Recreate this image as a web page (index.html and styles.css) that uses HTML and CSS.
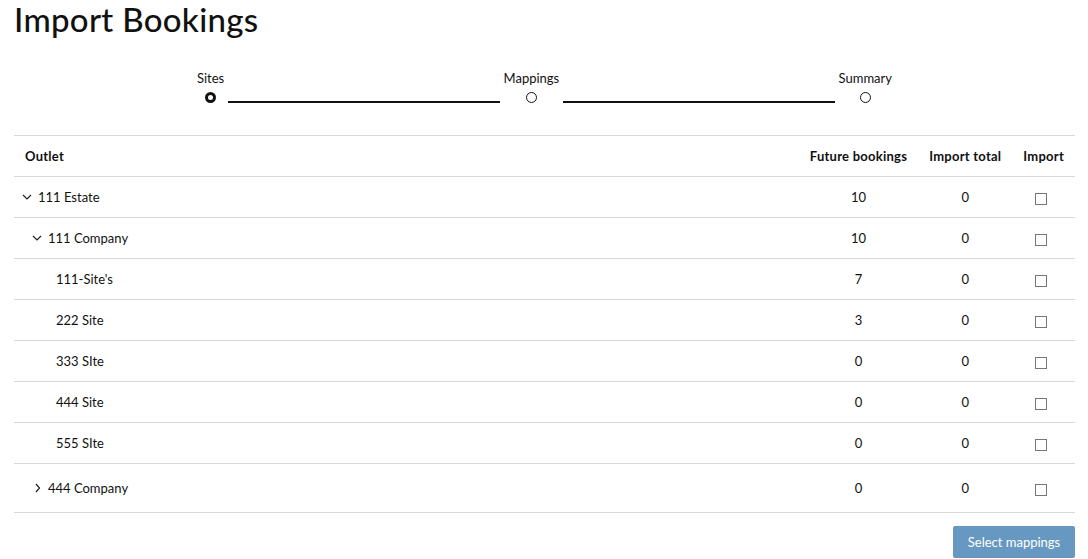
FILE: index.html
```html
<!DOCTYPE html>
<html>
<head>
<meta charset="utf-8">
<link rel="stylesheet" href="styles.css">
</head>
<body>
<main class="page">
  <h1 class="title">Import Bookings</h1>

  <div class="stepper">
    <div class="step">
      <span class="step-label">Sites</span>
      <span class="step-dot active"></span>
    </div>
    <div class="step-line"></div>
    <div class="step">
      <span class="step-label">Mappings</span>
      <span class="step-dot"></span>
    </div>
    <div class="step-line"></div>
    <div class="step">
      <span class="step-label">Summary</span>
      <span class="step-dot"></span>
    </div>
  </div>

  <table class="grid">
    <thead>
      <tr>
        <th class="col-outlet">Outlet</th>
        <th class="col-num">Future bookings</th>
        <th class="col-num">Import total</th>
        <th class="col-num">Import</th>
      </tr>
    </thead>
    <tbody>
      <tr>
        <td class="col-outlet"><span class="outlet lvl0"><svg class="chev" width="10" height="10" viewBox="0 0 10 10"><polyline points="1,3 5,7 9,3" fill="none" stroke="#222" stroke-width="1.2"/></svg>111 Estate</span></td>
        <td class="col-num">10</td><td class="col-num">0</td><td class="col-num"><span class="box"></span></td>
      </tr>
      <tr>
        <td class="col-outlet"><span class="outlet lvl1"><svg class="chev" width="10" height="10" viewBox="0 0 10 10"><polyline points="1,3 5,7 9,3" fill="none" stroke="#222" stroke-width="1.2"/></svg>111 Company</span></td>
        <td class="col-num">10</td><td class="col-num">0</td><td class="col-num"><span class="box"></span></td>
      </tr>
      <tr>
        <td class="col-outlet"><span class="outlet lvl2">111-Site's</span></td>
        <td class="col-num">7</td><td class="col-num">0</td><td class="col-num"><span class="box"></span></td>
      </tr>
      <tr>
        <td class="col-outlet"><span class="outlet lvl2">222 Site</span></td>
        <td class="col-num">3</td><td class="col-num">0</td><td class="col-num"><span class="box"></span></td>
      </tr>
      <tr>
        <td class="col-outlet"><span class="outlet lvl2">333 SIte</span></td>
        <td class="col-num">0</td><td class="col-num">0</td><td class="col-num"><span class="box"></span></td>
      </tr>
      <tr>
        <td class="col-outlet"><span class="outlet lvl2">444 Site</span></td>
        <td class="col-num">0</td><td class="col-num">0</td><td class="col-num"><span class="box"></span></td>
      </tr>
      <tr>
        <td class="col-outlet"><span class="outlet lvl2">555 SIte</span></td>
        <td class="col-num">0</td><td class="col-num">0</td><td class="col-num"><span class="box"></span></td>
      </tr>
      <tr class="group-row">
        <td class="col-outlet"><span class="outlet lvl1"><svg class="chev" width="10" height="10" viewBox="0 0 10 10"><polyline points="4,1 7.5,5 4,9" fill="none" stroke="#222" stroke-width="1.2"/></svg>444 Company</span></td>
        <td class="col-num">0</td><td class="col-num">0</td><td class="col-num"><span class="box"></span></td>
      </tr>
    </tbody>
  </table>

  <div class="actions">
    <button class="btn" type="button">Select mappings</button>
  </div>
</main>
</body>
</html>
```

FILE: styles.css
```css
html, body {
  margin: 0;
  padding: 0;
  background: #fff;
}

body {
  font-family: Lato, "Noto Sans", sans-serif;
  color: #111;
  font-size: 13px;
}

.page {
  padding: 0 13px 0 14px;
}

.title {
  margin: 0;
  font-size: 33px;
  line-height: 38px;
  font-weight: 500;
  letter-spacing: 0.3px;
}

.stepper {
  display: flex;
  align-items: flex-end;
  padding: 32px 183px 0 183px;
}

.step {
  display: flex;
  flex-direction: column;
  align-items: center;
}

.step-label {
  font-size: 13px;
  line-height: 16px;
}

.step-dot {
  margin-top: 6px;
  width: 11px;
  height: 11px;
  border-radius: 50%;
  border: 1.5px solid #111;
  box-sizing: border-box;
}

.step-dot.active {
  border: 3.5px solid #111;
}

.step-line {
  flex: 1;
  height: 2px;
  background: #111;
  margin: 0 4px 0 4px;
}

.grid {
  margin-top: 32px;
  width: 100%;
  border-collapse: collapse;
  border-top: 1px solid #d8d8d8;
}

.grid th,
.grid td {
  height: 40px;
  padding: 0 11px;
  border-bottom: 1px solid #d8d8d8;
  vertical-align: middle;
  white-space: nowrap;
}

.grid th {
  font-weight: 700;
  font-size: 13px;
  letter-spacing: 0.25px;
}

.grid th.col-outlet {
  text-align: left;
}

.col-outlet {
  text-align: left;
  width: 100%;
}

.grid td.col-outlet {
  padding-left: 8px;
}

.col-num {
  text-align: center;
}

.outlet {
  display: inline-flex;
  align-items: center;
  gap: 6px;
}

.outlet.lvl1 {
  margin-left: 10px;
}

.outlet.lvl2 {
  margin-left: 34px;
}

.group-row td {
  height: 48px;
}

.box {
  display: inline-block;
  width: 12px;
  height: 12px;
  margin-right: 6px;
  border: 1px solid #777;
  box-sizing: border-box;
  vertical-align: middle;
}

.actions {
  display: flex;
  justify-content: flex-end;
  margin-top: 13px;
}

.btn {
  font-family: Lato, "Noto Sans", sans-serif;
  font-size: 13px;
  color: #fff;
  background: #6798c1;
  border: none;
  border-radius: 2px;
  width: 122px;
  height: 32px;
  padding: 0;
}
```
